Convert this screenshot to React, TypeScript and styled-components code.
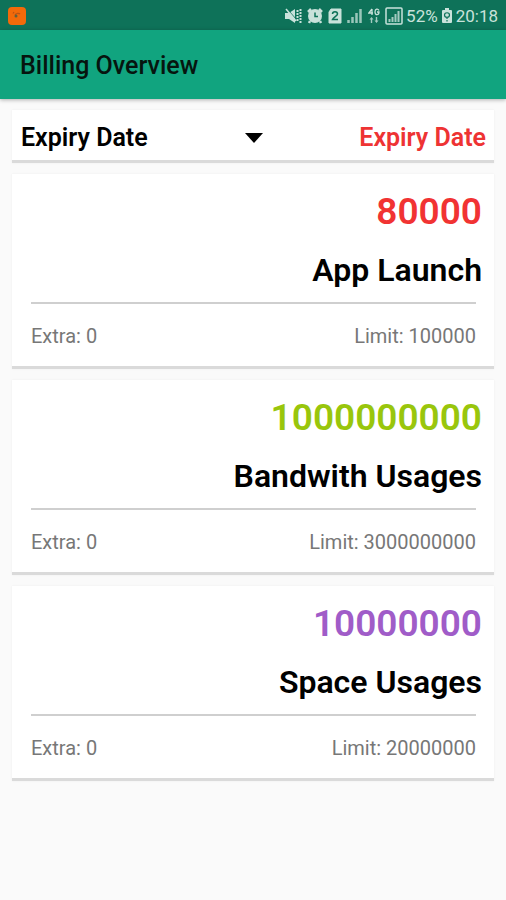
import React, { useState } from "react";
import styled, { createGlobalStyle } from "styled-components";

const GlobalStyle = createGlobalStyle`
  *, *::before, *::after { box-sizing: border-box; }
  body {
    margin: 0;
    background: #fafafa;
    color: #000;
    font-family: Roboto, "Liberation Sans", sans-serif;
  }
`;

const StatusBar = styled.div`
  display: flex;
  align-items: center;
  justify-content: space-between;
  height: 30px;
  padding: 2px 8px 0;
  background: #0e7259;
  color: #c9e2db;
`;

const StatusGroup = styled.div<{ $gap: number }>`
  display: flex;
  align-items: center;
  gap: ${({ $gap }) => $gap}px;
`;

const StatusText = styled.span`
  font-size: 17px;
  line-height: 20px;
`;

const Icon = styled.svg`
  display: block;
  flex: none;
`;

const AppBar = styled.header`
  display: flex;
  align-items: center;
  height: 69px;
  padding: 3px 20px 0;
  background: #11a47f;
  box-shadow: 0 1px 4px rgba(0, 0, 0, 0.3);
`;

const PageTitle = styled.h1`
  margin: 0;
  color: #06150f;
  font-size: 25px;
  line-height: 32px;
  font-weight: 500;
`;

const Content = styled.main`
  display: flex;
  flex-direction: column;
  gap: 11px;
  padding: 11px 12px;
`;

const Panel = styled.section`
  background: #fff;
  border-bottom: 3px solid #dadada;
  box-shadow: 0 0 2px rgba(0, 0, 0, 0.06);
`;

const FilterPanel = styled(Panel)`
  display: flex;
  align-items: center;
  justify-content: space-between;
  height: 53px;
  padding: 5px 8px 0 9px;
`;

const SelectBox = styled.div`
  display: grid;
  grid-template-columns: 1fr;
  align-items: center;
  width: 52%;
`;

const Select = styled.select`
  grid-area: 1 / 1;
  appearance: none;
  width: 100%;
  margin: 0;
  padding: 0;
  border: 0;
  background: transparent;
  color: #000;
  font-family: inherit;
  font-size: 25px;
  line-height: 32px;
  font-weight: 600;
`;

const Caret = styled.svg`
  grid-area: 1 / 1;
  justify-self: end;
  pointer-events: none;
`;

const FilterValue = styled.span`
  color: #ee3333;
  font-size: 25px;
  line-height: 32px;
  font-weight: 600;
`;

const UsagePanel = styled(Panel)`
  padding: 16px 12px 16px 19px;
`;

const Value = styled.p<{ $color: string }>`
  margin: 0;
  color: ${({ $color }) => $color};
  font-size: 37px;
  line-height: 44px;
  font-weight: 600;
  text-align: right;
`;

const Name = styled.h2`
  margin: 16px 0 0;
  font-size: 32px;
  line-height: 40px;
  font-weight: 600;
  text-align: right;
`;

const Details = styled.div`
  display: flex;
  justify-content: space-between;
  margin: 12px 6px 0 0;
  padding-top: 18px;
  border-top: 2px solid #cfcfcf;
  color: #777;
  font-size: 20px;
  line-height: 28px;
`;

const usages = [
  { name: "App Launch", value: "80000", limit: "100000", color: "#f13333" },
  { name: "Bandwith Usages", value: "1000000000", limit: "3000000000", color: "#99c60c" },
  { name: "Space Usages", value: "10000000", limit: "20000000", color: "#a05cc8" },
];

function AppBadge() {
  return (
    <Icon width="18" height="18" viewBox="0 0 18 18">
      <rect width="18" height="18" rx="4" fill="#f26a0a" />
      <path d="M5 6.500 6 5M7 8c1-2 4-2 5-1" fill="none" stroke="#bd5315" strokeWidth="1.300" />
      <circle cx="8" cy="9" r="1.500" fill="#5c6140" />
    </Icon>
  );
}

function MutedIcon() {
  return (
    <Icon width="17" height="16" viewBox="0 0 17 16">
      <path d="M0 5h4l6-4v14l-6-4H0Z" fill="currentColor" />
      <path d="m2 1 10 11" stroke="#0e7259" strokeWidth="1" />
      <path d="m1 1 10 12" stroke="currentColor" strokeWidth="1.500" />
      <path d="M12.500 2v12M15.500 1v14" fill="none" stroke="currentColor" strokeWidth="2" strokeDasharray="2 1" />
    </Icon>
  );
}

function AlarmIcon() {
  return (
    <Icon width="16" height="16" viewBox="0 0 16 16">
      <path d="m1 4 3-3m8 0 3 3M3 13l-1 2m11-2 1 2" stroke="currentColor" strokeWidth="2.500" />
      <circle cx="8" cy="8" r="7" fill="currentColor" />
      <path d="M8 4.500v4h3" fill="none" stroke="#0e7259" strokeWidth="1.500" />
    </Icon>
  );
}

function SimIcon() {
  return (
    <Icon width="14" height="16" viewBox="0 0 14 16">
      <path d="M3 1h10v14H1V4Z" fill="currentColor" stroke="currentColor" strokeLinejoin="round" />
      <path d="M4.500 6c0-3 5-3 5 0 0 2-4 3-5 5.500h5.500" fill="none" stroke="#0e7259" strokeWidth="1.500" />
    </Icon>
  );
}

function SignalIcon() {
  return (
    <Icon width="16" height="16" viewBox="0 0 16 16">
      <path d="M1.500 12v3M5.500 9v6M9.500 5v10M13.500 1v14" stroke="currentColor" strokeWidth="2.500" opacity=".75" />
    </Icon>
  );
}

function DataIcon() {
  return (
    <Icon width="12" height="16" viewBox="0 0 12 16">
      <path d="M4 1v6M4 1 .8 5H5M11 2.500C10 .5 7 .5 7 4s4 3.500 4 0H9" fill="none" stroke="currentColor" strokeWidth="1.300" />
      <path d="m3.500 9 2 2.500H4.200V15H2.800v-3.500H1.500Zm5 6-2-2.500h1.300V9h1.400v3.500h1.300Z" fill="currentColor" opacity=".8" />
    </Icon>
  );
}

function FramedSignalIcon() {
  return (
    <Icon width="18" height="18" viewBox="0 0 18 18">
      <rect x="1" y="1" width="16" height="16" rx="1" fill="none" stroke="currentColor" strokeWidth="1.500" />
      <path d="M4.500 12v3M7.500 10v5M10.500 7v8M13.500 4v11" stroke="currentColor" strokeWidth="2" opacity=".8" />
    </Icon>
  );
}

function BatteryIcon() {
  return (
    <Icon width="12" height="16" viewBox="0 0 12 16">
      <path d="M4 0h4v2h2q1 0 1 1v11q0 1-1 1H2q-1 0-1-1V3q0-1 1-1h2Z" fill="currentColor" />
      <path d="M3.500 7C3.500 4 8.500 4 8.500 7M3.500 7c0 3 5 3 5 0M6 9v2M6 12v1.500" fill="none" stroke="#0e7259" strokeWidth="1.200" />
    </Icon>
  );
}

export default function App() {
  const [filter, setFilter] = useState("Expiry Date");
  return (
    <>
      <GlobalStyle />
      <StatusBar>
        <AppBadge />
        <StatusGroup $gap={3}>
          <StatusGroup $gap={5}>
            <MutedIcon />
            <AlarmIcon />
            <SimIcon />
            <SignalIcon />
            <DataIcon />
            <FramedSignalIcon />
          </StatusGroup>
          <StatusText>52%</StatusText>
          <BatteryIcon />
          <StatusText>20:18</StatusText>
        </StatusGroup>
      </StatusBar>
      <AppBar>
        <PageTitle>Billing Overview</PageTitle>
      </AppBar>
      <Content>
        <FilterPanel>
          <SelectBox>
            <Select aria-label="Billing field" value={filter} onChange={(e) => setFilter(e.target.value)}>
              <option>Expiry Date</option>
            </Select>
            <Caret width="18" height="10" viewBox="0 0 18 10" aria-hidden="true">
              <path d="M0 0h18L9 10Z" fill="#000" />
            </Caret>
          </SelectBox>
          <FilterValue>{filter}</FilterValue>
        </FilterPanel>
        {usages.map((usage) => (
          <UsagePanel key={usage.name}>
            <Value $color={usage.color}>{usage.value}</Value>
            <Name>{usage.name}</Name>
            <Details>
              <span>Extra: 0</span>
              <span>Limit: {usage.limit}</span>
            </Details>
          </UsagePanel>
        ))}
      </Content>
    </>
  );
}
